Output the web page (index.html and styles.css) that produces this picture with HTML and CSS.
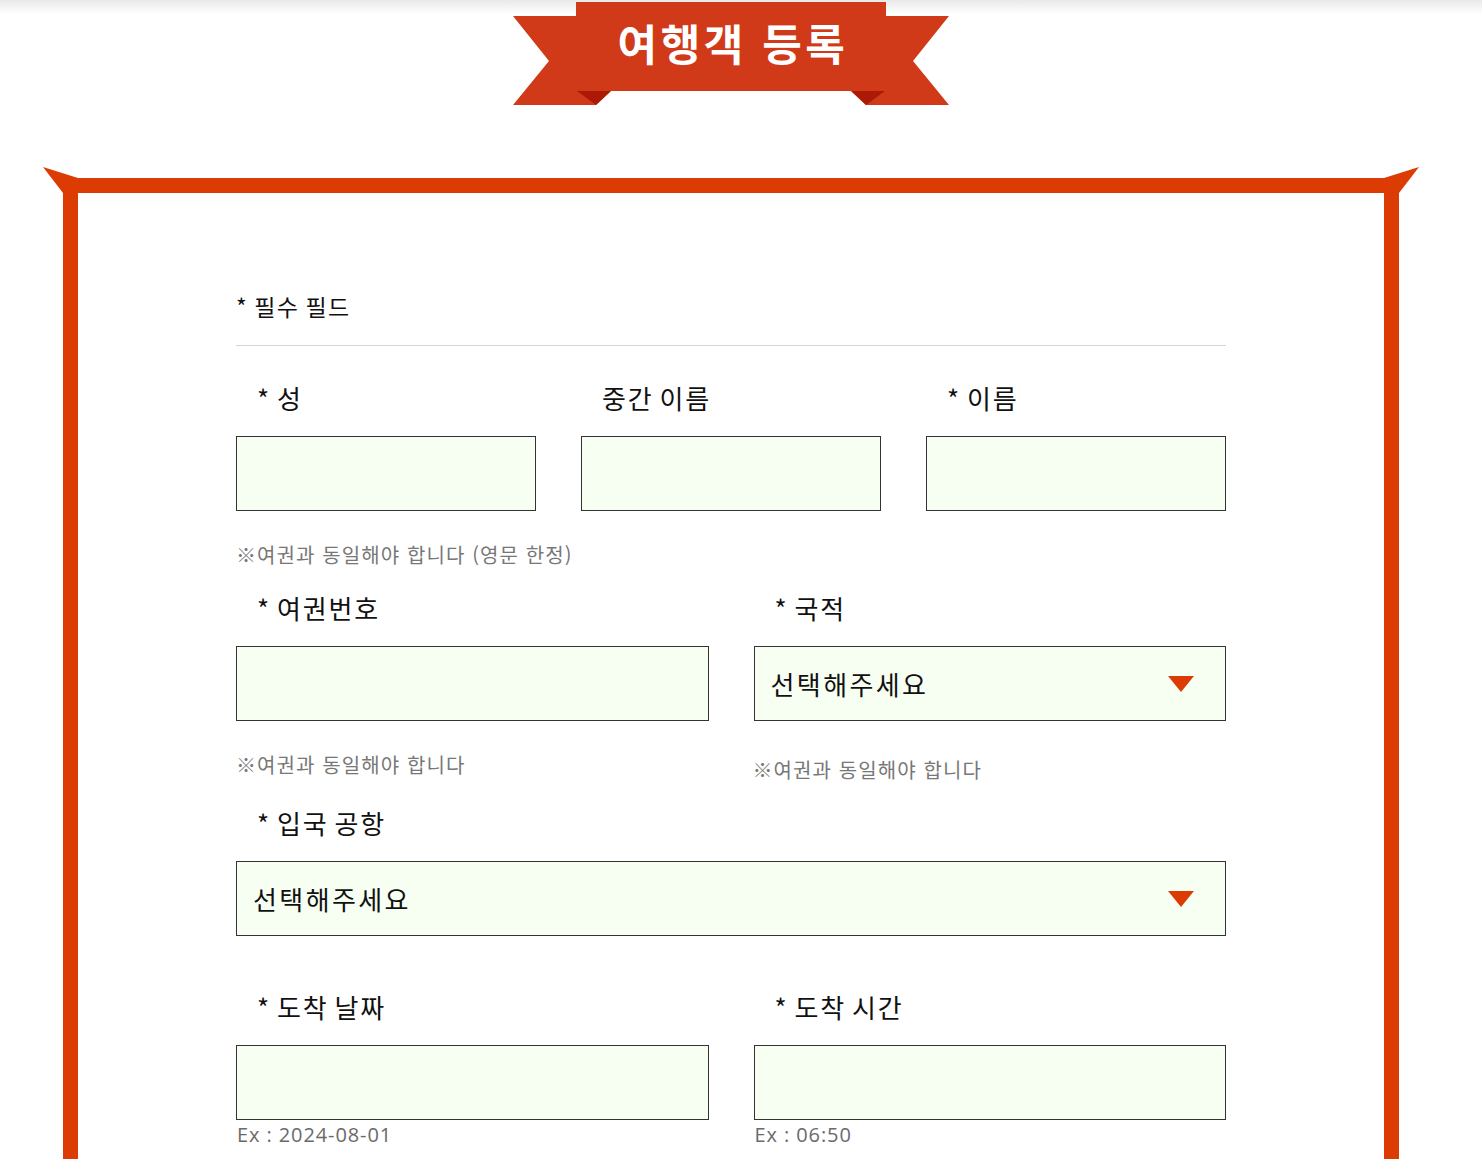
FILE: index.html
```html
<!DOCTYPE html>
<html lang="ko">
<head>
  <meta charset="UTF-8" />
  <meta name="viewport" content="width=device-width, initial-scale=1.0" />
  <title>여행객 등록</title>
  <link rel="stylesheet" href="styles.css">
</head>
<body>
<div class="page">

  <header class="ribbon">
    <svg class="ribbon-bg" width="436" height="106" viewBox="0 0 436 106">
      <polygon points="0,16 98,16 98,91 83,105 0,105 36,61" fill="#d13a19"/>
      <polygon points="64,91 98,91 83,105" fill="#ab1a04"/>
      <polygon points="436,16 338,16 338,91 353,105 436,105 400,61" fill="#d13a19"/>
      <polygon points="372,91 338,91 353,105" fill="#ab1a04"/>
      <rect x="63" y="2" width="310" height="89" fill="#d13a19"/>
    </svg>
    <h1 class="ribbon-title">여행객 등록</h1>
  </header>

  <main class="frame">
    <svg class="corner corner-left" width="35" height="26" viewBox="0 0 35 26">
      <polygon points="0,0 35,11 35,26 20,26" fill="#dc3b03"/>
    </svg>
    <svg class="corner corner-right" width="35" height="26" viewBox="0 0 35 26">
      <polygon points="35,0 0,11 0,26 15,26" fill="#dc3b03"/>
    </svg>

    <p class="required">* 필수 필드</p>

    <div class="row row-3">
      <div class="field">
        <label class="label">* 성</label>
        <input class="box" type="text">
      </div>
      <div class="field">
        <label class="label">중간 이름</label>
        <input class="box" type="text">
      </div>
      <div class="field">
        <label class="label">* 이름</label>
        <input class="box" type="text">
      </div>
    </div>
    <p class="note">※여권과 동일해야 합니다 (영문 한정)</p>

    <div class="row row-2">
      <div class="field">
        <label class="label">* 여권번호</label>
        <input class="box" type="text">
        <p class="note">※여권과 동일해야 합니다</p>
      </div>
      <div class="field">
        <label class="label">* 국적</label>
        <div class="box select">
          <span>선택해주세요</span>
          <svg width="26" height="16" viewBox="0 0 26 16"><polygon points="0,0 26,0 13,16" fill="#dc3b03"/></svg>
        </div>
        <p class="note note-low">※여권과 동일해야 합니다</p>
      </div>
    </div>

    <div class="row">
      <div class="field">
        <label class="label">* 입국 공항</label>
        <div class="box select">
          <span>선택해주세요</span>
          <svg width="26" height="16" viewBox="0 0 26 16"><polygon points="0,0 26,0 13,16" fill="#dc3b03"/></svg>
        </div>
      </div>
    </div>

    <div class="row row-2 row-far">
      <div class="field">
        <label class="label">* 도착 날짜</label>
        <input class="box" type="text">
        <p class="hint">Ex : 2024-08-01</p>
      </div>
      <div class="field">
        <label class="label">* 도착 시간</label>
        <input class="box" type="text">
        <p class="hint">Ex : 06:50</p>
      </div>
    </div>
  </main>

</div>
</body>
</html>
```

FILE: styles.css
```css
* { box-sizing: border-box; }
body {
  margin: 0;
  font-family: "Noto Sans CJK KR", "Noto Sans", sans-serif;
  color: #111;
  background: linear-gradient(#e9e9e9, #fff 14px) no-repeat;
  overflow: hidden;
}
.page {
  width: 1462px;
}
.ribbon {
  position: relative;
  width: 436px;
  height: 106px;
  margin: 0 auto;
}
.ribbon-bg { display: block; }
.ribbon-title {
  position: absolute;
  top: 0;
  left: 0;
  right: 0;
  margin: 0;
  height: 88px;
  line-height: 84px;
  text-align: center;
  color: #fff;
  font-size: 43px;
  font-weight: bold;
  letter-spacing: 3.5px;
  text-indent: 4px;
}
.frame {
  position: relative;
  margin: 72px 63px 0;
  border: 15px solid #dc3b03;
  border-bottom: none;
  padding: 98px 158px 200px;
  background: #fff;
}
.corner {
  position: absolute;
  top: -26px;
  display: block;
}
.corner-left { left: -35px; }
.corner-right { right: -35px; }
.required {
  margin: 0;
  font-size: 23px;
  line-height: 30px;
  letter-spacing: 1.5px;
  word-spacing: -2px;
  padding-bottom: 24px;
  border-bottom: 1px solid #d6d6d6;
}
.row { margin-top: 21px; }
.row-3 {
  display: grid;
  grid-template-columns: 300px 300px 300px;
  justify-content: space-between;
  margin-top: 34px;
}
.row-2 {
  display: grid;
  grid-template-columns: 1fr 1fr;
  gap: 45px;
}
.row-far { margin-top: 53px; }
.label {
  display: block;
  font-size: 26px;
  line-height: 36px;
  letter-spacing: 1.8px;
  word-spacing: -3px;
  padding-left: 21px;
  margin-bottom: 20px;
}
.box {
  display: block;
  width: 100%;
  height: 75px;
  margin: 0;
  border: 1px solid #333;
  background: #f7fff2;
  font: inherit;
}
.select {
  display: flex;
  align-items: center;
  justify-content: space-between;
  padding: 0 31px 0 16px;
  font-size: 26px;
  letter-spacing: 2.4px;
}
.note {
  margin: 30px 0 0;
  font-size: 20px;
  line-height: 28px;
  letter-spacing: 1.1px;
  color: #777;
}
.note-low { margin-top: 35px; margin-left: -1px; }
.hint {
  margin: 3px 0 0 1px;
  font-family: "Open Sans", sans-serif;
  font-size: 20px;
  line-height: 24px;
  letter-spacing: 0.9px;
  color: #6a6a6a;
}
```
